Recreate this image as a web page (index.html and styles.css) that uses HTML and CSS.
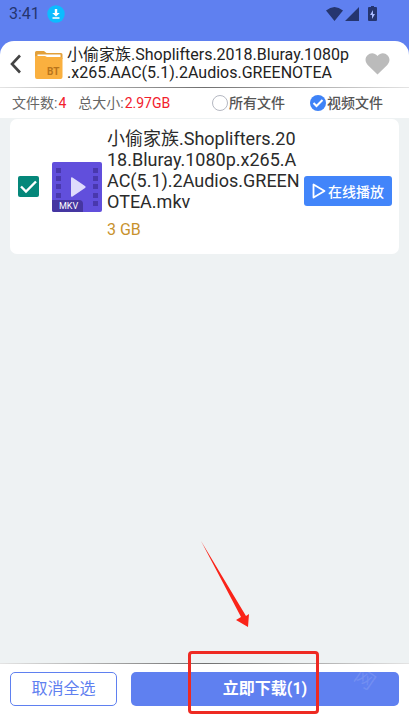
FILE: index.html
```html
<!DOCTYPE html>
<html lang="zh-CN">
<head>
<meta charset="utf-8">
<meta name="viewport" content="width=device-width, initial-scale=1">
<title>小偷家族</title>
<link rel="stylesheet" href="styles.css">
</head>
<body>
<div class="status">
  <span class="time">3:41</span>
  <svg class="status-dl" viewBox="0 0 18 18" aria-hidden="true"><circle cx="9" cy="9" r="8.7" fill="#0cbcff"/><path d="M7.800 4h2.400v4h2.600L9 11.500 5.200 8h2.600zM5.500 12.300h7v1.400h-7z" fill="#fff"/></svg>
  <svg class="status-icons" viewBox="0 0 52 18" aria-hidden="true">
    <path d="M0 5.500Q8.500-1.500 17 5.500L8.500 16zM33 2v14H19z" fill="#25356f"/>
    <path d="M43 2h2V1h3v1h2q1 0 1 1v12q0 1-1 1h-7q-1 0-1-1V3q0-1 1-1z" fill="#25356f"/>
    <path d="M47 5l-3 5h2v4l3-5h-2z" fill="#a9bbff"/>
  </svg>
</div>
<div class="sheet">
  <header class="header">
    <button class="back" aria-label="返回"><svg viewBox="0 0 12 20"><path d="M10 1.500L2 10l8 8.500" fill="none" stroke="#444" stroke-width="2.600"/></svg></button>
    <svg class="folder" viewBox="0 0 28 29" aria-hidden="true">
      <path d="M0 2.500Q0 1 1.500 1H9l2.500 2H26q1.500 0 1.500 1.500V9H0z" fill="#e2a03a"/>
      <path d="M2.500 4.500h23V9h-23z" fill="#fff"/>
      <path d="M0 7q0-1 1-1h9l2 1h14q1.500 0 1.500 1.500V27q0 2-2 2H2q-2 0-2-2z" fill="#fab03f"/>
      <text class="folder-label" x="12" y="25">BT</text>
    </svg>
    <h1 class="title">小偷家族.Shoplifters.2018.Bluray.1080p.x265.AAC(5.1).2Audios.GREENOTEA</h1>
    <button class="heart" aria-label="收藏"><svg viewBox="0 0 24 22"><path d="M12 21.500L2.200 12C-4.500 4.500 6-4.500 12 3 18-4.500 28.500 4.500 21.800 12z" fill="#bbb"/></svg></button>
  </header>
  <div class="rule"></div>
  <div class="filters">
    <span class="stat">文件数:<b>4</b></span>
    <span class="stat">总大小:<b>2.97GB</b></span>
    <label class="choice choice-all"><input type="radio" name="kind">所有文件</label>
    <label class="choice"><input type="radio" name="kind" checked>视频文件</label>
  </div>
</div>
<main class="content">
  <article class="card">
    <input class="check" type="checkbox" checked aria-label="选择文件">
    <svg class="thumb" viewBox="0 0 50 50" aria-hidden="true">
      <rect width="50" height="50" rx="2" fill="#614fdc"/>
      <path d="M4 6h5v5H4zM4 14h5v5H4zM4 22h5v5H4zM4 31h5v5H4zM41 6h5v5h-5zM41 14h5v5h-5zM41 22h5v5h-5zM41 31h5v5h-5zM41 39h5v5h-5z" fill="#4938ad"/>
      <path d="M0 38h27q4 0 4 4v8H2q-2 0-2-2z" fill="#4536a1"/>
      <path d="M19 16.500q0-2 1.500-1L33 24q1.500 1 0 2l-12.500 8.500q-1.500 1-1.500-1z" fill="#dfdcfc"/>
      <text class="thumb-label" x="7" y="47">MKV</text>
    </svg>
    <div class="info">
      <h2 class="name">小偷家族.Shoplifters.2018.Bluray.1080p.x265.AAC(5.1).2Audios.GREENOTEA.mkv</h2>
      <p class="size">3 GB</p>
    </div>
    <button class="play"><svg viewBox="0 0 14 16" aria-hidden="true"><path d="M1.500 1.500v13L12.500 8z" fill="none" stroke="#fff" stroke-width="1.800" stroke-linejoin="round"/></svg>在线播放</button>
  </article>
</main>
<footer class="footer">
  <div class="rule"></div>
  <div class="actions">
    <button class="cancel">取消全选</button>
    <button class="download">立即下载(1)</button>
  </div>
  <span class="watermark" aria-hidden="true">网</span>
  <div class="marker" aria-hidden="true"></div>
  <svg class="arrow" viewBox="0 0 49 88" aria-hidden="true"><path d="M0 0L40 76l-5 3 12 7 1-13-3 2z" fill="#fa2419"/></svg>
</footer>
</body>
</html>
```
FILE: styles.css
```css
* { box-sizing: border-box; }
body {
  margin: 0;
  min-height: 100vh;
  display: flex;
  flex-direction: column;
  background: #eef2f3;
  color: #2b2b2b;
  font-family: Roboto, "Noto Sans CJK SC", sans-serif;
}
button { margin: 0; padding: 0; border: 0; background: none; font: inherit; }
svg { display: block; }
h1, h2, p { margin: 0; font-weight: 400; }

.status {
  display: flex;
  align-items: center;
  height: 56px;
  padding: 0 31px 28px 9px;
  background: #5f80f0;
}
.time { font-size: 16px; line-height: 28px; color: #25356f; }
.status-dl { width: 18px; height: 18px; margin-left: 7px; }
.status-icons { width: 52px; height: 18px; margin-left: auto; }

.sheet { margin-top: -15px; background: #fff; border-radius: 14px 14px 0 0; }
.header { display: flex; align-items: center; height: 46px; padding: 0 19px 0 10px; }
.back svg { width: 12px; height: 20px; }
.folder { width: 28px; height: 29px; margin-left: 13px; flex: none; }
.folder-label { font: 700 10px Roboto, sans-serif; fill: #b8741b; }
.title {
  flex: 1;
  margin: 0 12px 0 4px;
  font-size: 16px;
  line-height: 18px;
  line-break: anywhere;
  color: #222;
}
.heart svg { width: 25px; height: 22px; }
.rule { height: 1px; background: linear-gradient(90deg, #e4e4e4, #707070 50%, #e4e4e4); }

.filters { display: flex; align-items: center; height: 30px; padding: 0 26px 0 12px; font-size: 14px; line-height: 20px; color: #666; white-space: nowrap; }
.stat { margin-right: 12px; }
.stat b { margin-left: 1px; font-weight: 400; color: #f2202c; }
.choice { display: flex; align-items: center; font-weight: 500; color: #555; }
.choice-all { margin: 0 25px 0 auto; }
.choice input {
  appearance: none;
  width: 16px;
  height: 16px;
  margin: 0 1px 0 0;
  border: 1px solid #b5b8c2;
  border-radius: 50%;
}
.choice input:checked {
  border: 0;
  background: #3e82f7 url("data:image/svg+xml,%3Csvg xmlns='http://www.w3.org/2000/svg' viewBox='0 0 16 16'%3E%3Cpath d='M3.500 8l3 3 6-6' fill='none' stroke='white' stroke-width='2'/%3E%3C/svg%3E");
}

.content { flex: 1; padding: 1px 10px; }
.card { display: flex; align-items: center; padding: 9px 7px 9px 8px; background: #fff; border-radius: 7px; }
.check {
  appearance: none;
  flex: none;
  width: 21px;
  height: 21px;
  margin: 0;
  border-radius: 2px;
  background: #05877a url("data:image/svg+xml,%3Csvg xmlns='http://www.w3.org/2000/svg' viewBox='0 0 21 21'%3E%3Cpath d='M3 10.500l5 5L18 5.500' fill='none' stroke='white' stroke-width='2.400'/%3E%3C/svg%3E");
}
.thumb { flex: none; width: 50px; height: 50px; margin-left: 13px; }
.thumb-label { font: 9px Roboto, sans-serif; fill: #fff; }
.info { flex: 1; margin: 0 2px 0 5px; padding-bottom: 5px; }
.name { font-size: 18px; line-height: 21px; word-break: break-all; color: #2b2b2b; }
.size { margin-top: 8px; font-size: 16px; line-height: 20px; color: #c8922d; }
.play {
  display: flex;
  flex: none;
  align-items: center;
  justify-content: center;
  gap: 2px;
  width: 88px;
  height: 30px;
  margin-top: 8px;
  border-radius: 3px;
  background: #4285fa;
  color: #fff;
  font-size: 14px;
  font-weight: 500;
}
.play svg { width: 14px; height: 16px; }

.footer { position: relative; background: #fff; }
.actions { display: flex; gap: 14px; padding: 8px 10px 15px; }
.cancel, .download { height: 34px; border-radius: 5px; font-size: 16px; line-height: 24px; }
.cancel { width: 107px; border: 1px solid #5f80f0; color: #5f80f0; }
.download { flex: 1; background: #5f80f0; color: #fff; font-weight: 700; }
.watermark { position: absolute; right: 34px; top: 6px; font-size: 20px; line-height: 20px; color: rgba(255, 255, 255, 0.12); transform: rotate(35deg); }
.marker { position: absolute; left: 188px; top: -12px; width: 131px; height: 63px; border: 3px solid #ee2a22; border-radius: 4px; }
.arrow { position: absolute; left: 201px; top: -122px; width: 49px; height: 88px; }
```
